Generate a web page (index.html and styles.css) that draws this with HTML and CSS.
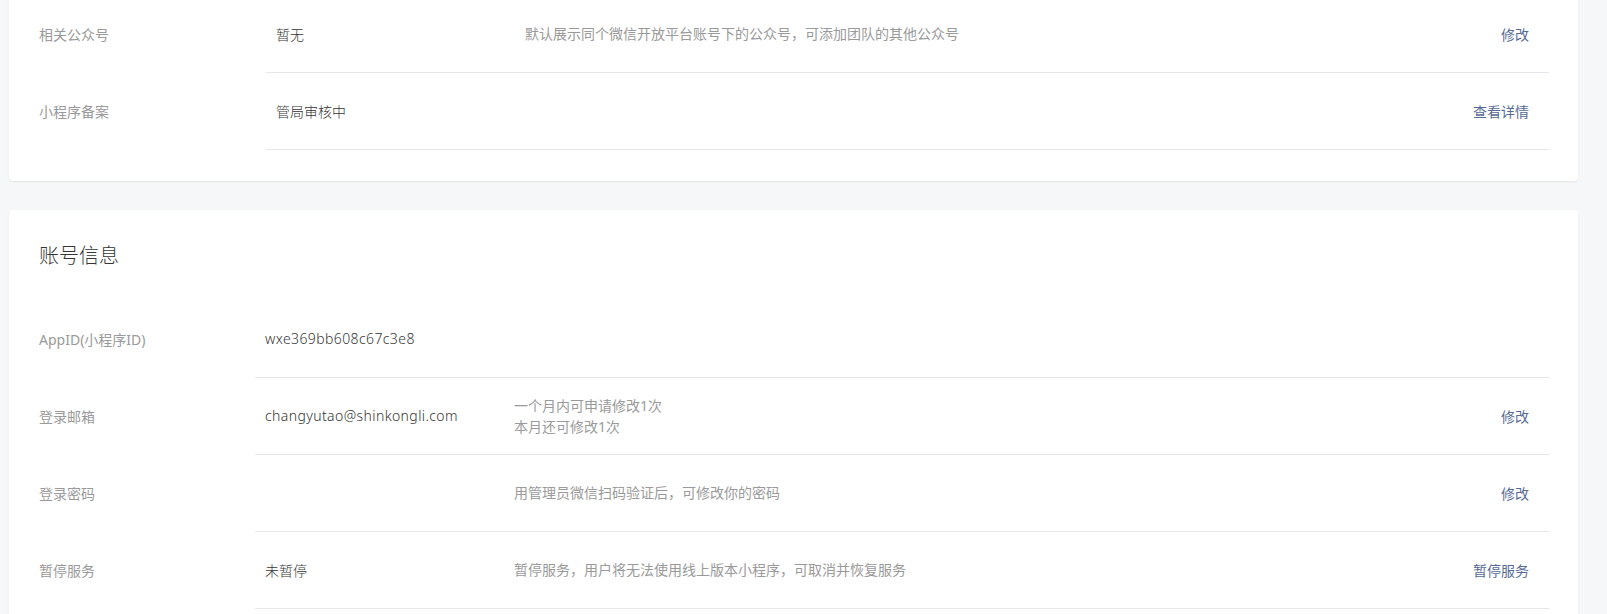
FILE: index.html
```html
<!DOCTYPE html>
<html lang="zh-CN">
<head>
<meta charset="utf-8">
<title>设置</title>
<link rel="stylesheet" href="styles.css">
</head>
<body>
<div class="page">
  <section class="card card-top">
    <div class="row">
      <div class="label label-wide">相关公众号</div>
      <div class="content">
        <div class="value">暂无</div>
        <div class="desc">默认展示同个微信开放平台账号下的公众号，可添加团队的其他公众号</div>
        <a class="link">修改</a>
      </div>
    </div>
    <div class="row">
      <div class="label label-wide">小程序备案</div>
      <div class="content">
        <div class="value">管局审核中</div>
        <div class="desc"></div>
        <a class="link">查看详情</a>
      </div>
    </div>
  </section>

  <section class="card card-account">
    <h2 class="card-title">账号信息</h2>
    <div class="row">
      <div class="label">AppID(小程序ID)</div>
      <div class="content">
        <div class="value latin">wxe369bb608c67c3e8</div>
        <div class="desc"></div>
      </div>
    </div>
    <div class="row">
      <div class="label">登录邮箱</div>
      <div class="content">
        <div class="value latin">changyutao@shinkongli.com</div>
        <div class="desc">一个月内可申请修改1次<br>本月还可修改1次</div>
        <a class="link">修改</a>
      </div>
    </div>
    <div class="row">
      <div class="label">登录密码</div>
      <div class="content">
        <div class="value"></div>
        <div class="desc">用管理员微信扫码验证后，可修改你的密码</div>
        <a class="link">修改</a>
      </div>
    </div>
    <div class="row">
      <div class="label">暂停服务</div>
      <div class="content">
        <div class="value">未暂停</div>
        <div class="desc">暂停服务，用户将无法使用线上版本小程序，可取消并恢复服务</div>
        <a class="link">暂停服务</a>
      </div>
    </div>
  </section>
</div>
</body>
</html>
```
FILE: styles.css
```css
html, body {
  margin: 0;
  padding: 0;
  background: #f6f7f9;
}

body {
  font-family: "Noto Sans", "Noto Sans CJK SC", sans-serif;
  font-size: 14px;
  color: #353535;
  overflow: hidden;
}

.page {
  margin-top: -4px;
  padding: 0 29px 40px 9px;
  display: flex;
  flex-direction: column;
  gap: 29px;
}

.card {
  background: #ffffff;
  border-radius: 4px;
  box-shadow: 0 1px 2px rgba(0, 0, 0, 0.08);
  padding: 0 29px 31px 30px;
}

.card-top {
  border-top-left-radius: 0;
  border-top-right-radius: 0;
}

.card-account {
  padding-top: 31px;
}

.card-title {
  margin: 0 0 30px;
  font-size: 20px;
  font-weight: 300;
  line-height: 30px;
  color: #353535;
}

.row {
  display: flex;
  height: 77px;
}

.label {
  width: 216px;
  flex: none;
  display: flex;
  align-items: center;
  padding-bottom: 2px;
  color: #9a9a9a;
}

.label-wide {
  width: 227px;
}

.content {
  flex: 1;
  display: flex;
  align-items: center;
  border-bottom: 1px solid #e7e7eb;
  padding: 0 20px 1px 10px;
}

.value {
  width: 249px;
  flex: none;
  color: #353535;
  font-weight: 300;
}

.latin {
  letter-spacing: 0.4px;
}

.desc {
  flex: 1;
  color: #9a9a9a;
  line-height: 21px;
}

.link {
  color: #576b95;
  cursor: pointer;
  text-decoration: none;
}
```
